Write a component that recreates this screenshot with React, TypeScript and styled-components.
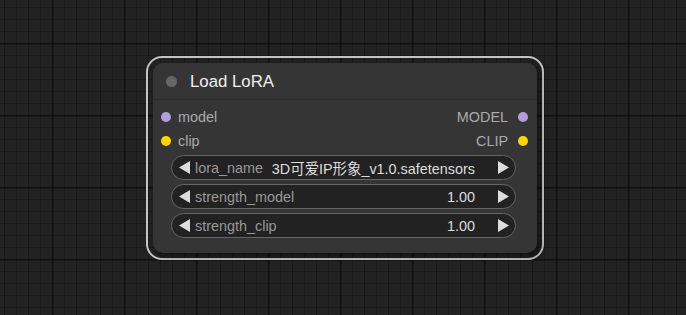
import React from 'react';
import styled, { createGlobalStyle } from 'styled-components';

const GlobalStyle = createGlobalStyle`
  html, body {
    margin: 0;
    padding: 0;
    background: #222;
  }
  * {
    box-sizing: border-box;
  }
`;

const FONT = `"Liberation Sans", Arial, "Noto Sans CJK SC", sans-serif`;

interface ISlot {
    name: string,
    color: string,
}

interface IWidget {
    label: string,
    value: string,
}

const inputs: ISlot[] = [
    { name: 'model', color: '#b39ddb' },
    { name: 'clip', color: '#ffd500' },
];

const outputs: ISlot[] = [
    { name: 'MODEL', color: '#b39ddb' },
    { name: 'CLIP', color: '#ffd500' },
];

const widgets: IWidget[] = [
    { label: 'lora_name', value: '3D可爱IP形象_v1.0.safetensors' },
    { label: 'strength_model', value: '1.00' },
    { label: 'strength_clip', value: '1.00' },
];

const LeftArrow = () => (
    <svg width="11" height="13" viewBox="0 0 11 13">
        <polygon points="11,0 0,6.5 11,13" fill="#ddd" />
    </svg>
);

const RightArrow = () => (
    <svg width="11" height="13" viewBox="0 0 11 13">
        <polygon points="0,0 11,6.5 0,13" fill="#ddd" />
    </svg>
);

const App = () => {
    return (
        <Canvas>
            <GlobalStyle />
            <Selection>
                <Node>
                    <Title>
                        <TitleDot />
                        <TitleText>Load LoRA</TitleText>
                    </Title>
                    <Slots>
                        {inputs.map((input, i) => (
                            <SlotRow key={input.name}>
                                <SlotSide $gap={7}>
                                    <SlotDot color={input.color} />
                                    <SlotLabel>{input.name}</SlotLabel>
                                </SlotSide>
                                <SlotSide $gap={10}>
                                    <SlotLabel>{outputs[i].name}</SlotLabel>
                                    <SlotDot color={outputs[i].color} />
                                </SlotSide>
                            </SlotRow>
                        ))}
                    </Slots>
                    <Widgets>
                        {widgets.map((w) => (
                            <Widget key={w.label}>
                                <ArrowBox $side="left"><LeftArrow /></ArrowBox>
                                <WidgetLabel>{w.label}</WidgetLabel>
                                <WidgetValue>{w.value}</WidgetValue>
                                <ArrowBox $side="right"><RightArrow /></ArrowBox>
                            </Widget>
                        ))}
                    </Widgets>
                </Node>
            </Selection>
        </Canvas>
    )
}
export default App;

const Canvas = styled.div`
    width: 686px;
    height: 315px;
    overflow: hidden;
    padding: 56px 0 0 146px;
    font-family: ${FONT};
    background-color: #222;
    background-image:
        linear-gradient(to right, rgba(0, 0, 0, 0.3) 2px, transparent 2px),
        linear-gradient(to bottom, rgba(0, 0, 0, 0.3) 2px, transparent 2px),
        linear-gradient(to right, rgba(0, 0, 0, 0.28) 1px, transparent 1px),
        linear-gradient(to bottom, rgba(0, 0, 0, 0.28) 1px, transparent 1px);
    background-size: 72px 72px, 72px 72px, 12px 12px, 12px 12px;
    background-position: 52px 0, 0 43px, 4px 0, 0 7px;
`;

const Selection = styled.div`
    width: 398px;
    height: 204px;
    border: 2px solid #c4c4c4;
    border-radius: 16px;
    padding: 5px;
`;

const Node = styled.div`
    width: 384px;
    height: 190px;
    background: #353535;
    border-radius: 10px;
    box-shadow: 3px 3px 6px rgba(0, 0, 0, 0.5);
    display: flex;
    flex-direction: column;
    overflow: hidden;
`;

const Title = styled.div`
    height: 37px;
    flex-shrink: 0;
    display: flex;
    align-items: center;
    padding-left: 13px;
    background: #353535;
    border-bottom: 1px solid #2b2b2b;
`;

const TitleDot = styled.span`
    width: 11px;
    height: 11px;
    border-radius: 50%;
    background: #666;
`;

const TitleText = styled.span`
    margin: 2px 0 0 13px;
    font-size: 16.8px;
    color: #f0f0f0;
`;

const Slots = styled.div`
    padding-top: 5px;
    display: flex;
    flex-direction: column;
`;

const SlotRow = styled.div`
    height: 24px;
    display: flex;
    align-items: center;
    justify-content: space-between;
    padding: 0 9px 0 8px;
`;

const SlotSide = styled.div<{ $gap: number }>`
    display: flex;
    align-items: center;
    gap: ${(p) => p.$gap}px;
`;

const SlotDot = styled.span<{ color: string }>`
    width: 10px;
    height: 10px;
    border-radius: 50%;
    background: ${(p) => p.color};
`;

const SlotLabel = styled.span`
    font-size: 14.4px;
    color: #aaa;
`;

const Widgets = styled.div`
    margin: 2px 21px 0 18px;
    display: flex;
    flex-direction: column;
    gap: 4px;
`;

const Widget = styled.div`
    height: 25px;
    display: flex;
    align-items: center;
    background: #222;
    border: 1px solid #666;
    border-radius: 13px;
    font-size: 14.4px;
    white-space: nowrap;
`;

const ArrowBox = styled.span<{ $side: 'left' | 'right' }>`
    display: flex;
    margin-left: ${(p) => (p.$side === 'left' ? '7px' : '0')};
    margin-right: ${(p) => (p.$side === 'right' ? '6px' : '0')};
`;

const WidgetLabel = styled.span`
    margin-left: 5px;
    color: #999;
`;

const WidgetValue = styled.span`
    flex: 1;
    text-align: right;
    margin-right: 23px;
    color: #ddd;
`;
